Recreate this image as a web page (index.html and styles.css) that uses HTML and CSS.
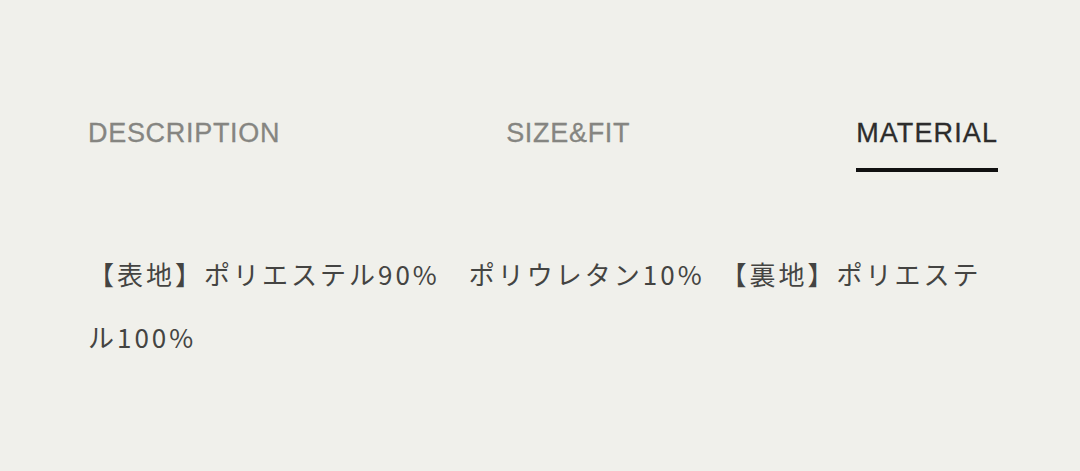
FILE: index.html
```html
<!DOCTYPE html>
<html lang="ja">
<head>
<meta charset="utf-8">
<link rel="stylesheet" href="styles.css">
</head>
<body>
<div class="page">
  <nav class="tabs">
    <div class="tab">DESCRIPTION</div>
    <div class="tab">SIZE&amp;FIT</div>
    <div class="tab active">MATERIAL</div>
  </nav>
  <p class="content">【表地】ポリエステル90%　ポリウレタン10%　【裏地】ポリエステル100%</p>
</div>
</body>
</html>
```

FILE: styles.css
```css
html, body {
  margin: 0;
  padding: 0;
  background: #f0f0eb;
}
.page {
  width: 1080px;
  height: 471px;
  padding: 110px 80px 0 88px;
  box-sizing: border-box;
}
.tabs {
  display: flex;
  justify-content: space-between;
  align-items: flex-start;
  padding-right: 2px;
}
.tab {
  font-family: "Liberation Sans", Arial, sans-serif;
  font-size: 27px;
  letter-spacing: 0.7px;
  line-height: 46px;
  color: #858581;
  padding-bottom: 12px;
  border-bottom: 4px solid transparent;
  -webkit-text-stroke: 0.3px currentColor;
}
.tab.active {
  color: #2c2c2c;
  border-bottom-color: #111;
  letter-spacing: 1.1px;
}
.content {
  margin: 70px 0 0 0;
  font-family: "Noto Sans CJK JP", sans-serif;
  font-size: 26px;
  letter-spacing: 3px;
  line-height: 63px;
  color: #444442;
}
```
